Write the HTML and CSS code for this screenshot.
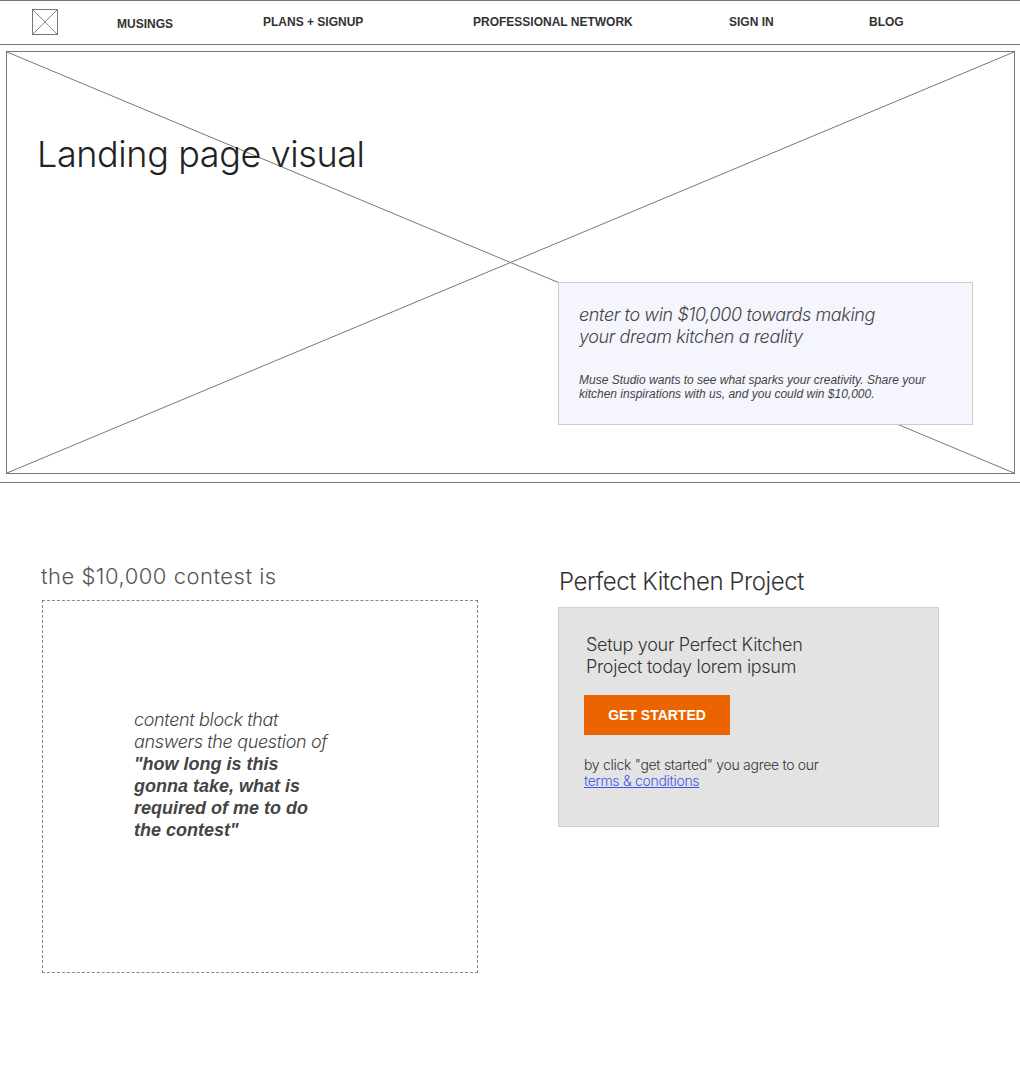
FILE: index.html
```html
<!DOCTYPE html>
<html>
<head>
<meta charset="utf-8">
<link rel="stylesheet" href="styles.css">
</head>
<body>
<header class="topbar">
  <div class="logo">
    <svg width="26" height="26" viewBox="0 0 26 26"><rect x="0.5" y="0.5" width="25" height="25" fill="none" stroke="#777"/><path d="M1 1L25 25M25 1L1 25" stroke="#888" stroke-width="1"/></svg>
  </div>
  <nav class="nav">
    <a class="nav-item nav-musings">MUSINGS</a>
    <a class="nav-item">PLANS + SIGNUP</a>
    <a class="nav-item">PROFESSIONAL NETWORK</a>
    <a class="nav-item">SIGN IN</a>
    <a class="nav-item">BLOG</a>
  </nav>
</header>

<section class="hero-wrap">
  <div class="hero">
    <svg class="hero-x" viewBox="0 0 100 100" preserveAspectRatio="none"><path d="M0 0L100 100M0 100L100 0" stroke="#777" stroke-width="1" vector-effect="non-scaling-stroke" fill="none"/></svg>
    <h1 class="hero-title">Landing page visual</h1>
    <div class="callout">
      <p class="callout-lead">enter to win $10,000 towards making<br>your dream kitchen a reality</p>
      <p class="callout-small">Muse Studio wants to see what sparks your creativity. Share your<br>kitchen inspirations with us, and you could win $10,000.</p>
    </div>
  </div>
</section>

<main class="lower">
  <div class="col-left">
    <h2 class="contest-title">the $10,000 contest is</h2>
    <div class="dashed">
      <p class="dashed-text">content block that<br>answers the question of<br><strong>"how long is this<br>gonna take, what is<br>required of me to do<br>the contest"</strong></p>
    </div>
  </div>
  <div class="col-right">
    <h2 class="project-title">Perfect Kitchen Project</h2>
    <div class="project-box">
      <p class="project-lead">Setup your Perfect Kitchen<br>Project today lorem ipsum</p>
      <button class="cta">GET STARTED</button>
      <p class="terms">by click "get started" you agree to our<br><a class="terms-link" href="#">terms &amp; conditions</a></p>
    </div>
  </div>
</main>
</body>
</html>
```

FILE: styles.css
```css
* { box-sizing: border-box; }
html, body { margin: 0; padding: 0; background: #fff; }
body {
  width: 1020px;
  font-family: "Liberation Sans", Arial, sans-serif;
  color: #333;
}
p, h1, h2 { margin: 0; }

.topbar {
  height: 45px;
  border-top: 1px solid #777;
  border-bottom: 1px solid #777;
  display: flex;
  align-items: center;
  padding-left: 32px;
}
.logo { width: 26px; height: 26px; display: flex; margin-top: -1px; }
.nav {
  display: grid;
  grid-template-columns: 146px 210px 256px 140px auto;
  margin-left: 59px;
}
.nav-item {
  font-size: 12px;
  font-weight: bold;
  color: #333;
  line-height: 14px;
}
.nav-musings { margin-top: 2px; }

.hero-wrap {
  padding: 6px 5px 8px 6px;
  border-bottom: 1px solid #777;
}
.hero {
  position: relative;
  height: 423px;
  border: 1px solid #777;
  display: flex;
  flex-direction: column;
}
.hero-x {
  position: absolute;
  left: 0; top: 0;
  width: 100%; height: 100%;
}
.hero-title {
  position: relative;
  font-family: Inter, Roboto, sans-serif;
  font-weight: 300;
  font-size: 36px;
  line-height: 44px;
  letter-spacing: -0.4px;
  color: #222;
  margin: 80px 0 0 30px;
}
.callout {
  position: relative;
  margin: auto 41px 48px auto;
  width: 415px;
  height: 143px;
  background: #f5f5fd;
  border: 1px solid #ccc;
  padding: 21px 20px 0 20px;
  font-style: italic;
  color: #444;
}
.callout-lead {
  font-family: Inter, Roboto, sans-serif;
  font-weight: 300;
  font-size: 18px;
  line-height: 22px;
  letter-spacing: -0.38px;
}
.callout-small {
  font-size: 12px;
  line-height: 14px;
  margin-top: 25px;
  font-family: "Liberation Sans", Arial, sans-serif;
}

.lower {
  display: flex;
  padding-left: 41px;
  gap: 80px;
}
.col-left { width: 437px; padding-top: 80px; }
.contest-title {
  font-family: Inter, Roboto, sans-serif;
  font-weight: 300;
  font-size: 22px;
  line-height: 26px;
  letter-spacing: 0.5px;
  color: #555;
}
.dashed {
  margin: 11px 0 0 1px;
  width: 436px;
  height: 373px;
  border: 1px dashed #888;
  padding: 108px 0 0 91px;
}
.dashed-text {
  font-family: Inter, Roboto, sans-serif;
  font-style: italic;
  font-weight: 300;
  font-size: 18px;
  line-height: 22px;
  letter-spacing: -0.35px;
  color: #444;
}
.dashed-text strong {
  font-family: "Liberation Sans", Arial, sans-serif;
  font-weight: bold;
  letter-spacing: 0;
}

.col-right { width: 381px; padding-top: 85px; }
.project-title {
  font-family: Inter, Roboto, sans-serif;
  font-weight: 300;
  font-size: 24px;
  line-height: 28px;
  letter-spacing: -0.45px;
  color: #333;
  margin-left: 1px;
}
.project-box {
  margin-top: 11px;
  height: 220px;
  background: #e3e3e3;
  border: 1px solid #d0d0d0;
  padding: 26px 0 0 25px;
}
.project-lead {
  font-family: Inter, Roboto, sans-serif;
  font-weight: 300;
  font-size: 18px;
  line-height: 22px;
  letter-spacing: -0.3px;
  color: #333;
  margin-left: 2px;
}
.cta {
  display: block;
  margin-top: 17px;
  width: 146px;
  height: 40px;
  border: 0;
  background: #eb6400;
  color: #fff;
  font-family: "Liberation Sans", Arial, sans-serif;
  font-weight: bold;
  font-size: 14px;
  padding: 0;
}
.terms {
  margin-top: 22px;
  font-family: Inter, Roboto, sans-serif;
  font-weight: 300;
  font-size: 14px;
  line-height: 16px;
  letter-spacing: -0.3px;
  color: #333;
}
.terms-link { color: #3d55e8; }
```
